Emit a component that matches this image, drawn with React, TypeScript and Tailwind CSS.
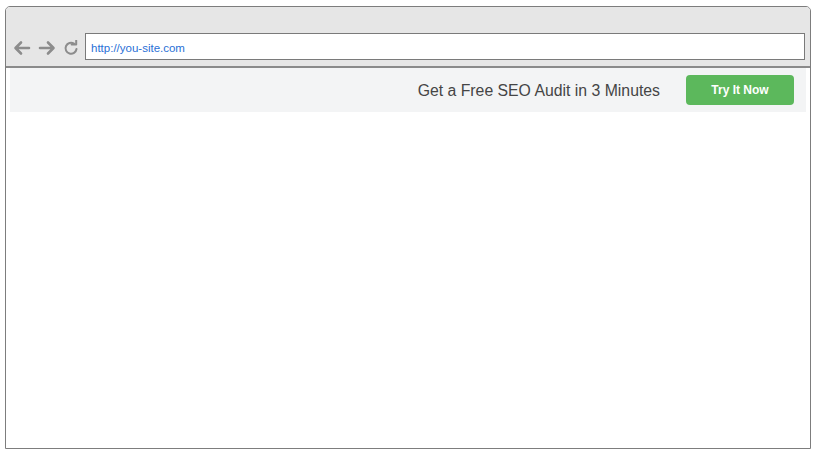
export default function App() {
  return (
    <div className="h-[454px] w-[816px] bg-white pl-[5px] pr-[5px] pt-[6px] pb-[5px] font-['Liberation_Sans',Arial,sans-serif]">
      <div className="flex h-full flex-col rounded-t-[5px] border border-[#7d7d7d] bg-white">
        <div className="flex h-[61px] items-end rounded-t-[4px] border-b-2 border-[#8a8a8a] bg-[#e6e6e6] pb-[6px] pl-[7px] pr-[5px]">
          <div className="flex h-[26px] items-center gap-[7px] pt-[2px] text-[#8c8c8c]">
            <svg width="18" height="16" viewBox="0 0 18 16" fill="none" stroke="currentColor" strokeWidth="2.6" strokeLinecap="round" strokeLinejoin="round">
              <path d="M16 8H3M8 2.5 2.5 8 8 13.5" />
            </svg>
            <svg width="18" height="16" viewBox="0 0 18 16" fill="none" stroke="currentColor" strokeWidth="2.6" strokeLinecap="round" strokeLinejoin="round">
              <path d="M2 8h13M10 2.5 15.5 8 10 13.5" />
            </svg>
            <svg width="16" height="16" viewBox="0 0 16 16" fill="none" stroke="currentColor" strokeWidth="2" strokeLinecap="round">
              <path d="M13.5 9A5.5 5.5 0 1 1 11 3.6" />
              <path d="M8.6 4.4h4.6V0.4" strokeLinejoin="round" />
            </svg>
          </div>
          <div className="ml-[6px] flex h-[27px] flex-1 items-center border border-[#7a7a7a] bg-white pl-[5px] pt-[5px] text-[11.5px] text-[#2a6fd6]">
            http://you-site.com
          </div>
        </div>
        <div className="mx-[4px] flex h-[44px] items-center justify-end bg-[#f3f4f5] pr-[12px]">
          <span className="mr-[26px] pt-[2px] text-[15.8px] text-[#454545]">Get a Free SEO Audit in 3 Minutes</span>
          <button className="h-[30px] w-[108px] rounded-[4px] bg-[#5cb85c] text-[12px] font-bold text-white">
            Try It Now
          </button>
        </div>
      </div>
    </div>
  );
}
